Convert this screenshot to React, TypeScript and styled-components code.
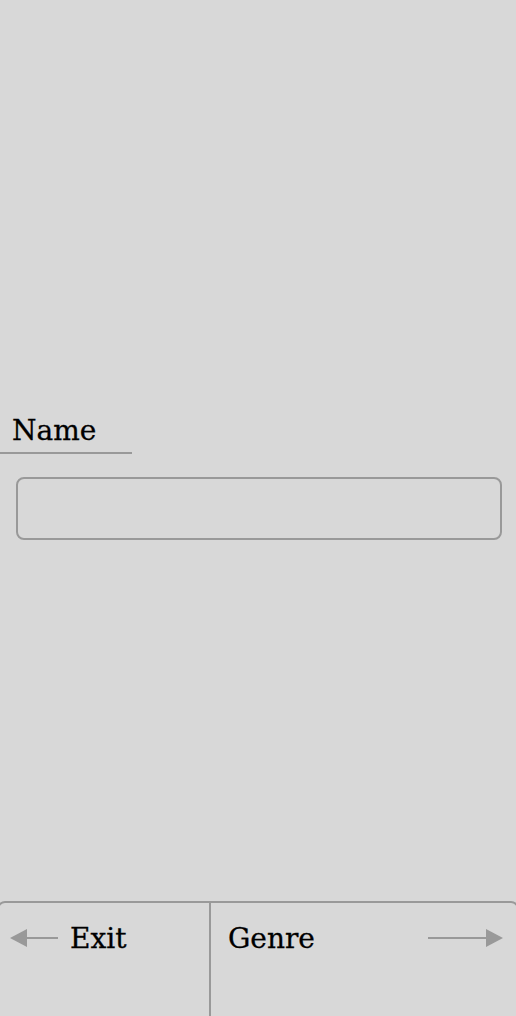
import React from 'react';
import styled, { createGlobalStyle } from 'styled-components';

const GlobalStyle = createGlobalStyle`
  html, body {
    margin: 0;
    padding: 0;
    background: #d8d8d8;
    overflow: hidden;
  }
  body {
    font-family: 'DejaVu Serif', 'Liberation Serif', serif;
    color: #000;
  }
`;

const Screen = styled.div`
  height: 100vh;
  display: flex;
  flex-direction: column;
  background: #d8d8d8;
`;

const Form = styled.div`
  flex: 1;
  display: flex;
  flex-direction: column;
  padding-top: 415px;
`;

const Label = styled.div`
  width: 120px;
  padding: 0 0 5px 12px;
  font-size: 28px;
  line-height: 32px;
  border-bottom: 2px solid #999;
  -webkit-text-stroke: 0.3px #000;
`;

const Input = styled.input`
  box-sizing: border-box;
  margin: 23px 14px 0 16px;
  height: 63px;
  border: 2px solid #999;
  border-radius: 8px;
  background: transparent;
  outline: none;
  font: inherit;
  font-size: 28px;
  padding: 0 12px;
`;

const Footer = styled.div`
  height: 113px;
  margin: 0 -3px;
  display: flex;
  border: 2px solid #999;
  border-bottom: none;
  border-radius: 8px 8px 0 0;
`;

const Cell = styled.div<{ $divider?: boolean }>`
  box-sizing: border-box;
  display: flex;
  align-items: flex-start;
  gap: 12px;
  padding: ${p => (p.$divider ? '22px 14px 0 11px' : '20px 14px 0 17px')};
  width: ${p => (p.$divider ? '212px' : 'auto')};
  flex: ${p => (p.$divider ? 'none' : 1)};
  border-right: ${p => (p.$divider ? '2px solid #999' : 'none')};
  margin-top: ${p => (p.$divider ? '-2px' : '0')};
`;

const NavText = styled.span<{ $grow?: boolean }>`
  font-size: 28px;
  line-height: 32px;
  flex: ${p => (p.$grow ? 1 : 'none')};
  -webkit-text-stroke: 0.3px #000;
`;

const Arrow = styled.svg`
  flex: none;
  margin-top: 5px;
`;

const LeftArrow = () => (
  <Arrow width="48" height="20" viewBox="0 0 48 20">
    <polygon points="0,10 17,1 17,19" fill="#999" />
    <rect x="16" y="9" width="32" height="2" fill="#999" />
  </Arrow>
);

const RightArrow = () => (
  <Arrow width="75" height="20" viewBox="0 0 75 20">
    <rect x="0" y="9" width="59" height="2" fill="#999" />
    <polygon points="58,1 75,10 58,19" fill="#999" />
  </Arrow>
);

export default function App() {
  return (
    <Screen>
      <GlobalStyle />
      <Form>
        <Label>Name</Label>
        <Input aria-label="Name" />
      </Form>
      <Footer>
        <Cell $divider>
          <LeftArrow />
          <NavText>Exit</NavText>
        </Cell>
        <Cell>
          <NavText $grow>Genre</NavText>
          <RightArrow />
        </Cell>
      </Footer>
    </Screen>
  );
}
